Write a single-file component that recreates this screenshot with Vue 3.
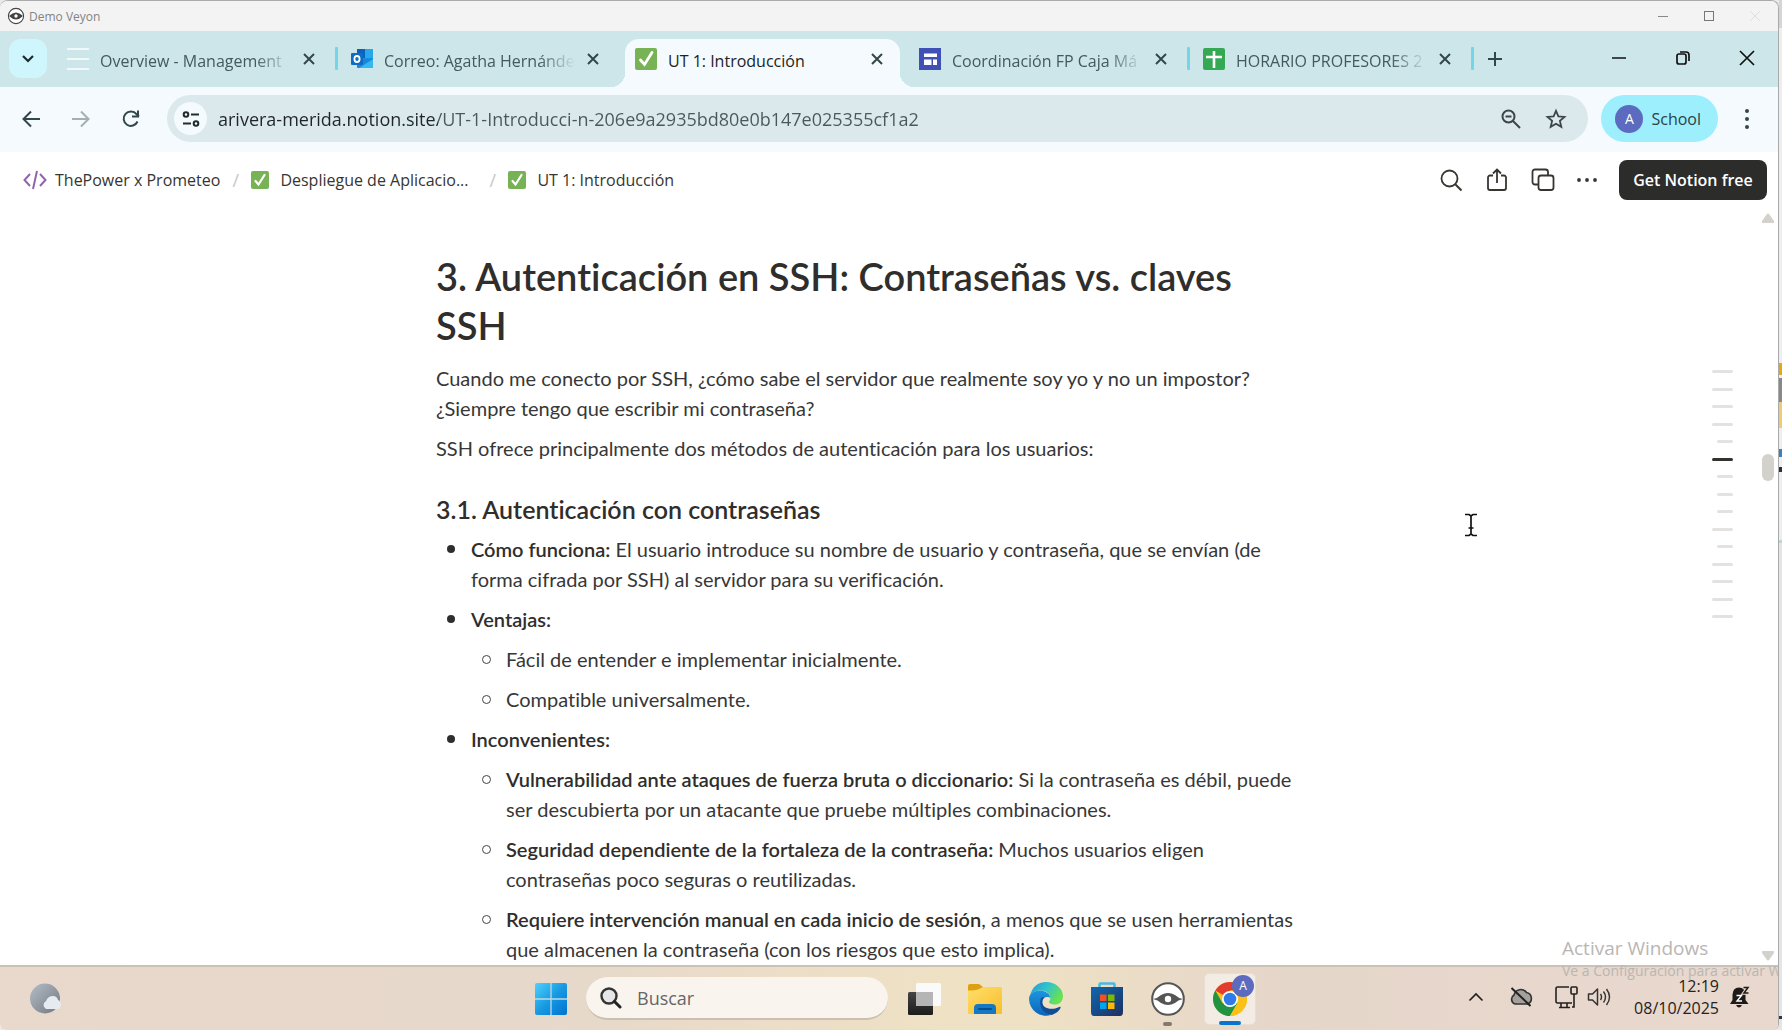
<script setup>
import { ref } from 'vue'

const tabs = [
  { icon: 'lines', title: 'Overview - Management', fade: true, sep: true },
  { icon: 'outlook', title: 'Correo: Agatha Hernánde', fade: true },
  { icon: 'check', title: 'UT 1: Introducción', active: true },
  { icon: 'sites', title: 'Coordinación FP Caja Má', fade: true, sep: true },
  { icon: 'sheets', title: 'HORARIO PROFESORES 2', fade: true, sep: true },
]
const url = ref('arivera-merida.notion.site/UT-1-Introducci-n-206e9a2935bd80e0b147e025355cf1a2')
const search = ref('')
const outline = ['', '', '', '', 'short', 'current', 'short', 'short', 'short', '', 'short', '', '', '', '']
</script>

<template>
  <div class="desktop">
    <div class="window">
      <header class="titlebar">
        <svg width="18" height="18" viewBox="0 0 18 18"><circle cx="9" cy="9" r="7.6" fill="#fff" stroke="#444" stroke-width="1.1" /><path d="M2 9q7-7 14 0q-7 7-14 0z" fill="#444" /><circle cx="9" cy="9" r="1.7" fill="#fff" /></svg>
        <span class="app-name">Demo Veyon</span>
        <button class="frame-btn" aria-label="Minimizar"><svg width="12" height="12"><path d="M1 6.500h10" stroke="#888" /></svg></button>
        <button class="frame-btn" aria-label="Maximizar"><svg width="12" height="12"><rect x="1.500" y="1.500" width="9" height="9" fill="none" stroke="#777" /></svg></button>
        <button class="frame-btn" aria-label="Cerrar"><svg width="12" height="12"><path d="M1 1l10 10M11 1L1 11" stroke="#ddd" /></svg></button>
      </header>

      <div class="tabstrip">
        <button class="tab-search" aria-label="Buscar pestañas"><svg width="14" height="10"><path d="M2 2l5 5 5-5" fill="none" stroke="#1c2a2d" stroke-width="2.200" /></svg></button>
        <nav class="tabs">
          <div v-for="t in tabs" :key="t.title" class="tab" :class="{ active: t.active, sep: t.sep }">
            <svg v-if="t.icon === 'lines'" width="22" height="24"><path d="M0 2h22M0 12h22M0 22h22" stroke="#fbfeff" stroke-width="1.500" /></svg>
            <svg v-else-if="t.icon === 'outlook'" width="22" height="24" viewBox="0 0 22 24"><rect x="6" y="2" width="16" height="18" fill="#1490df" /><rect x="14" y="2" width="8" height="9" fill="#28a8ea" /><rect x="6" y="2" width="8" height="9" fill="#0a63b8" /><path d="M6 12l16 0v8a1 1 0 0 1-1 1H7a1 1 0 0 1-1-1z" fill="#1b86d6" /><path d="M22 12L8 21h13a1 1 0 0 0 1-1z" fill="#35b8f1" /><rect x="0" y="6" width="12" height="12" rx="1" fill="#0f6cc4" /><ellipse cx="6" cy="12" rx="2.600" ry="3" fill="none" stroke="#fff" stroke-width="1.800" /></svg>
            <svg v-else-if="t.icon === 'check'" width="22" height="24" viewBox="0 0 22 24"><rect y="1" width="22" height="22" rx="2" fill="#77b255" /><path d="M5.500 13l4 4.500 7.500-12" fill="none" stroke="#fff" stroke-width="2.800" stroke-linecap="round" /></svg>
            <svg v-else-if="t.icon === 'sites'" width="22" height="24" viewBox="0 0 22 24"><rect y="1" width="22" height="22" fill="#3f51b5" /><path d="M5 6.500h13v3.500H5zM5 12.500h7.500v5.500H5zM14 12.500h4v5.500h-4z" fill="#fff" /></svg>
            <svg v-else width="22" height="24" viewBox="0 0 22 24"><rect y="1" width="22" height="22" rx="2" fill="#34a853" /><path d="M11 4v17M3 10h16" stroke="#fff" stroke-width="2.600" /></svg>
            <a href="#" class="tab-title" :class="{ fade: t.fade }">{{ t.title }}</a>
            <button class="tab-close" aria-label="Cerrar pestaña"><svg width="12" height="12"><path d="M1 1l10 10M11 1L1 11" stroke="currentColor" stroke-width="2" /></svg></button>
          </div>
          <button class="new-tab" aria-label="Nueva pestaña"><svg width="16" height="16"><path d="M8 1v14M1 8h14" stroke="#33464a" stroke-width="2" /></svg></button>
        </nav>
        <div class="win-controls">
          <button aria-label="Minimizar"><svg width="16" height="16"><path d="M1 8h14" stroke="#111" stroke-width="1.600" /></svg></button>
          <button aria-label="Restaurar"><svg width="16" height="16"><rect x="2" y="4" width="9" height="10" rx="2" fill="none" stroke="#111" stroke-width="1.700" /><path d="M5 2h6q3 0 3 3v6" fill="none" stroke="#111" stroke-width="1.700" /></svg></button>
          <button aria-label="Cerrar"><svg width="16" height="16"><path d="M1 1l14 14M15 1L1 15" stroke="#111" stroke-width="1.700" /></svg></button>
        </div>
      </div>

      <div class="toolbar">
        <button class="nav-btn" aria-label="Atrás"><svg width="20" height="20"><path d="M19 10H3M10 2.500L2.500 10l7.500 7.500" fill="none" stroke="#33464a" stroke-width="2" /></svg></button>
        <button class="nav-btn" aria-label="Adelante"><svg width="20" height="20"><path d="M1 10h16M10 2.500l7.500 7.500-7.500 7.500" fill="none" stroke="#a3b0b3" stroke-width="2" /></svg></button>
        <button class="nav-btn" aria-label="Recargar"><svg width="20" height="20"><path d="M16.500 12.500A7.200 7.200 0 1 1 15.500 5.200L18 7.500" fill="none" stroke="#33464a" stroke-width="2" /><path d="M18 1.500v7h-7v-2h5v-5z" fill="#33464a" /></svg></button>
        <div class="omnibox">
          <button class="site-info" aria-label="Información del sitio"><svg width="18" height="18"><g fill="none" stroke="#222c2e" stroke-width="2"><circle cx="4" cy="4.500" r="2.300" /><path d="M9 4.500h8M1 13.500h8" /><circle cx="14" cy="13.500" r="2.300" /></g></svg></button>
          <input v-model="url" class="url" aria-label="Dirección" spellcheck="false">
          <button class="plain" aria-label="Zoom"><svg width="22" height="22"><circle cx="8.500" cy="8.500" r="6" fill="none" stroke="#3c4648" stroke-width="2" /><path d="M13 13l7 7M5.500 8.500h6" stroke="#3c4648" stroke-width="2" /></svg></button>
          <button class="plain" aria-label="Marcador"><svg width="22" height="22"><path d="M11 2.800l2.400 5.600 6.100.5-4.600 4 1.400 5.900L11 15.700l-5.300 3.100 1.400-5.900-4.600-4 6.100-.5z" fill="none" stroke="#3c4648" stroke-width="1.800" /></svg></button>
        </div>
        <button class="profile"><span class="avatar">A</span>School</button>
        <button class="menu" aria-label="Menú"><svg width="6" height="22"><circle cx="3" cy="3" r="2" fill="#33464a" /><circle cx="3" cy="11" r="2" fill="#33464a" /><circle cx="3" cy="19" r="2" fill="#33464a" /></svg></button>
      </div>

      <div class="topbar">
        <nav class="crumbs">
          <a href="#"><svg class="code" width="24" height="20"><path d="M7 4L1.500 10 7 16M17 4l5.500 6-5.500 6M14 1l-4 18" fill="none" stroke="#9065b0" stroke-width="2" /></svg>ThePower x Prometeo</a>
          <span class="slash">/</span>
          <a href="#" class="parent"><svg class="tick" width="18" height="18"><rect width="18" height="18" rx="2" fill="#77b255" /><path d="M4.500 10l3 3.500L13.500 4" fill="none" stroke="#fff" stroke-width="2.200" stroke-linecap="round" /></svg>Despliegue de Aplicacio...</a>
          <span class="slash">/</span>
          <a href="#"><svg class="tick" width="18" height="18"><rect width="18" height="18" rx="2" fill="#77b255" /><path d="M4.500 10l3 3.500L13.500 4" fill="none" stroke="#fff" stroke-width="2.200" stroke-linecap="round" /></svg>UT 1: Introducción</a>
        </nav>
        <div class="actions">
          <button class="plain" aria-label="Buscar"><svg width="24" height="24"><circle cx="10.500" cy="10.500" r="8" fill="none" stroke="#373530" stroke-width="1.800" /><path d="M16.500 16.500l6 6" stroke="#373530" stroke-width="2" /></svg></button>
          <button class="plain" aria-label="Compartir"><svg width="24" height="24"><path d="M8 7.500H5a2 2 0 0 0-2 2V20a2 2 0 0 0 2 2h14a2 2 0 0 0 2-2V9.500a2 2 0 0 0-2-2h-3M12 15V2M8 5.500l4-4 4 4" fill="none" stroke="#373530" stroke-width="1.800" /></svg></button>
          <button class="plain" aria-label="Duplicar"><svg width="24" height="24"><rect x="7.500" y="7.500" width="15" height="14.500" rx="2.500" fill="none" stroke="#373530" stroke-width="1.800" /><path d="M7 16.500H4a2.500 2.500 0 0 1-2.500-2.500V4A2.500 2.500 0 0 1 4 1.500h10.500A2.500 2.500 0 0 1 17 4v3" fill="none" stroke="#373530" stroke-width="1.800" /></svg></button>
          <button class="plain" aria-label="Más"><svg width="20" height="24"><circle cx="2" cy="12" r="1.900" fill="#373530" /><circle cx="10" cy="12" r="1.900" fill="#373530" /><circle cx="18" cy="12" r="1.900" fill="#373530" /></svg></button>
          <button class="cta">Get Notion free</button>
        </div>
      </div>

      <main class="page">
        <div class="columns">
          <article class="doc">
            <h1>3. Autenticación en SSH: Contraseñas vs. claves<br>SSH</h1>
            <p>Cuando me conecto por SSH, ¿cómo sabe el servidor que realmente soy yo y no un impostor?<br>¿Siempre tengo que escribir mi contraseña?</p>
            <p>SSH ofrece principalmente dos métodos de autenticación para los usuarios:</p>
            <h2>3.1. Autenticación con contraseñas</h2>
            <ul>
              <li><div><b>Cómo funciona:</b> El usuario introduce su nombre de usuario y contraseña, que se envían (de<br>forma cifrada por SSH) al servidor para su verificación.</div></li>
              <li>
                <div><b>Ventajas:</b></div>
                <ul>
                  <li><div>Fácil de entender e implementar inicialmente.</div></li>
                  <li><div>Compatible universalmente.</div></li>
                </ul>
              </li>
              <li>
                <div><b>Inconvenientes:</b></div>
                <ul>
                  <li><div><b>Vulnerabilidad ante ataques de fuerza bruta o diccionario:</b> Si la contraseña es débil, puede<br>ser descubierta por un atacante que pruebe múltiples combinaciones.</div></li>
                  <li><div><b>Seguridad dependiente de la fortaleza de la contraseña:</b> Muchos usuarios eligen<br>contraseñas poco seguras o reutilizadas.</div></li>
                  <li><div><b>Requiere intervención manual en cada inicio de sesión</b>, a menos que se usen herramientas<br>que almacenen la contraseña (con los riesgos que esto implica).</div></li>
                </ul>
              </li>
            </ul>
          </article>
          <aside class="outline"><i v-for="(o, n) in outline" :key="n" :class="o"></i></aside>
        </div>
        <div class="scrollbar">
          <svg width="12" height="10"><path d="M5 1q1-1.200 2 0l5 7q.5 2-1 2H1q-1.500 0-1-2z" fill="#d3d1cb" /></svg>
          <span class="before"></span><span class="thumb"></span><span class="after"></span>
          <svg width="12" height="10"><path d="M5 9q1 1.200 2 0l5-7q.5-2-1-2H1Q-.5 0 0 2z" fill="#d3d1cb" /></svg>
        </div>
      </main>

      <footer class="taskbar">
        <button class="plain weather" aria-label="Tiempo"><svg width="32" height="32"><defs><linearGradient id="moon" x1="0" y1="0" x2="1" y2="1"><stop offset="0" stop-color="#b4bec8" /><stop offset="1" stop-color="#72777e" /></linearGradient></defs><circle cx="16" cy="15.500" r="15" fill="url(#moon)" /><path d="M17 26a4.500 4.500 0 0 1 0-8q2-5 7-5 4 0 5 4 3 1 3 4.500 0 4.500-4 4.500z" fill="#e6ebf1" /></svg></button>
        <div class="apps">
          <button class="plain" aria-label="Inicio"><svg width="32" height="32"><defs><linearGradient id="win" x1="0" y1="0" x2="1" y2="1"><stop offset="0" stop-color="#4fd2fd" /><stop offset=".5" stop-color="#189ae2" /><stop offset="1" stop-color="#0072d0" /></linearGradient></defs><rect width="32" height="32" rx="2" fill="url(#win)" /><path d="M16 0v32M0 16h32" stroke="#bcd9e6" stroke-width="1.300" /></svg></button>
          <label class="search"><svg width="22" height="22"><circle cx="9" cy="9" r="7.500" fill="#e6e6e6" stroke="#333" stroke-width="2.400" /><path d="M14.500 14.500l5.500 5.500" stroke="#222" stroke-width="3" stroke-linecap="round" /></svg><input v-model="search" placeholder="Buscar" aria-label="Buscar"></label>
          <button class="plain" aria-label="Vista de tareas"><svg width="34" height="34"><defs><linearGradient id="tv" x1="0" y1="0" x2="0" y2="1"><stop offset="0" stop-color="#444" /><stop offset="1" stop-color="#1c1c1c" /></linearGradient></defs><rect x="1" y="10" width="25" height="23" rx="1.500" fill="url(#tv)" /><rect x="9" y="1" width="25" height="23" rx="1.500" fill="#fafafa" /><rect x="9" y="10" width="17" height="14" fill="#b5b5b5" /></svg></button>
          <button class="plain" aria-label="Explorador de archivos"><svg width="34" height="34"><defs><linearGradient id="fold" x1="0" y1="0" x2="1" y2="1"><stop offset="0" stop-color="#ffde6b" /><stop offset="1" stop-color="#f8be2c" /></linearGradient></defs><path d="M0 4q0-2 2-2h9l4 3-3 5H0z" fill="#dca012" /><path d="M0 8.500q8 0 11-1.500l4-2h17q2 0 2 2v24q0 1-1 1H1q-1 0-1-1z" fill="url(#fold)" /><path d="M6 32v-6q0-4 4-4h14q4 0 4 4v6z" fill="#1478c4" /><path d="M11 27h12" stroke="#0a4f8d" stroke-width="2" stroke-linecap="round" /></svg></button>
          <button class="plain" aria-label="Edge"><svg width="34" height="34"><defs><linearGradient id="e1" x1="0" y1="0" x2="1" y2=".5"><stop offset="0" stop-color="#2794dc" /><stop offset=".5" stop-color="#30c3cc" /><stop offset="1" stop-color="#69e252" /></linearGradient><linearGradient id="e2" x1="0" y1="0" x2="0" y2="1"><stop offset="0" stop-color="#1c95e0" /><stop offset="1" stop-color="#0b66b9" /></linearGradient></defs><path d="M1 14C3 5 9 0 17 0c10 0 17 7 17 14 0 6-4 8.500-8 8.500-3.500 0-6-1.200-6-2.500 0-.8 1.300-1.400 1.300-3.500C21 12 17 8.500 12 8.500 6 8.500 2 11 1 14z" fill="url(#e1)" /><path d="M0 17C0 12 5 8.500 11 8.500c6 0 10 4 10.300 7.500-2-2-8-1.500-8 4.500 0 6 4.700 12 8.700 12.500A17 17 0 0 1 0 17z" fill="url(#e2)" /><path d="M12 16c-3 8 2 15.500 10 17 4-.5 8-4 9.500-7 .4-1-.4-1.500-1.300-1C22 29 13 26 13.300 20c0-2 .7-3.500 2-4.500-1.500-.5-2.600-.3-3.300.5z" fill="#124e96" /></svg></button>
          <button class="plain" aria-label="Microsoft Store"><svg width="34" height="34"><defs><linearGradient id="st" x1="0" y1="0" x2="1" y2="1"><stop offset="0" stop-color="#0f67b1" /><stop offset="1" stop-color="#1f3060" /></linearGradient></defs><path d="M9.500 6V2.500q0-1 1-1h13q1 0 1 1V6" fill="none" stroke="#49b9e3" stroke-width="2.500" /><path d="M1 5h32v25q0 4-3 4H4q-3 0-3-4z" fill="url(#st)" /><path d="M10 12.500h6.500V19H10z" fill="#f25022" /><path d="M18 12.500h6.500V19H18z" fill="#7fba00" /><path d="M10 20.500h6.500V27H10z" fill="#00a4ef" /><path d="M18 20.500h6.500V27H18z" fill="#ffb900" /></svg></button>
          <button class="plain running" aria-label="Veyon"><svg width="34" height="34"><circle cx="17" cy="17" r="15.800" fill="#fff" stroke="#555" stroke-width="2" /><path d="M2 17q5-1 8-4 7-4 14 0 3 3 8 4-5 1-8 4-7 4-14 0-3-3-8-4z" fill="#555" /><circle cx="17" cy="17" r="3.200" fill="#fff" /></svg></button>
          <button class="plain chrome" aria-label="Chrome"><svg width="34" height="34"><circle cx="17" cy="17" r="17" fill="#fbc116" /><path d="M17 17L2.300 8.500A17 17 0 0 1 31.700 8.500H17z" fill="#e33b2e" /><path d="M2.300 8.500A17 17 0 0 0 17 34l7.400-12.800L17 17l-7.400 4.200z" fill="#229342" /><path d="M31.700 8.500H17l7.400 12.700L17 34A17 17 0 0 0 31.700 8.500z" fill="#fbc116" /><circle cx="17" cy="17" r="8" fill="#fff" /><circle cx="17" cy="17" r="6.300" fill="#2f7be8" /></svg><span class="badge">A</span></button>
        </div>
        <div class="tray">
          <button class="plain up" aria-label="Iconos ocultos"><svg width="16" height="10"><path d="M1.500 8.500L8 2l6.500 6.500" fill="none" stroke="#222" stroke-width="1.700" /></svg></button>
          <button class="plain cloud" aria-label="OneDrive"><svg width="24" height="22"><path d="M6 18a5 5 0 0 1-1-9 7 7 0 0 1 12.500-2.500A6 6 0 0 1 18.500 18z" fill="#a5a09c" stroke="#333" stroke-width="1.600" /><path d="M2.500 2l19 18" stroke="#222" stroke-width="2" /></svg></button>
          <button class="plain" aria-label="Red"><svg width="24" height="24"><path d="M15 2H3.500Q2 2 2 4v12q0 2 1.500 2H18M7 18v4M13 18v4M5 22.500h11" fill="none" stroke="#222" stroke-width="1.600" /><rect x="17" y="2" width="6" height="7" rx="1" fill="none" stroke="#222" stroke-width="1.600" /><path d="M20 9v13h-2" fill="none" stroke="#222" stroke-width="1.600" /></svg></button>
          <button class="plain" aria-label="Volumen"><svg width="24" height="22"><path d="M1.500 8v6h4l5 5V3l-5 5z" fill="none" stroke="#333" stroke-width="1.500" stroke-linejoin="round" /><path d="M13.500 8q2 3 0 6M16.500 5.500q4 5.500 0 11M19.500 3q6 8 0 16" fill="none" stroke="#333" stroke-width="1.400" /></svg></button>
          <time class="clock">12:19<br>08/10/2025</time>
          <button class="plain" aria-label="Notificaciones"><svg width="20" height="22"><path d="M9 1.500q6 0 6.500 7V14l3 4H0l2.500-4V8.500q.5-7 6.500-7zM6 19h6q-3 5-6 0z" fill="#1d1a18" /><path d="M13.500 1.500H18l-4 5.500h4.500" fill="none" stroke="#e8d8cc" stroke-width="3.500" /><path d="M13.500 1.500H18l-4 5.500h4.500" fill="none" stroke="#1d1a18" stroke-width="1.500" /><path d="M6.500 9.500h5l-4.500 5.500h5" fill="none" stroke="#fff" stroke-width="1.400" /></svg></button>
        </div>
      </footer>

      <div class="watermark"><strong>Activar Windows</strong><span>Ve a Configuración para activar Windows.</span></div>
      <svg class="cursor" width="14" height="24"><path d="M1 1.500h4l2 1.500 2-1.500h4M7 3v18M1 22.500h4L7 21l2 1.500h4M4.500 15h5" fill="none" stroke="#111" stroke-width="1.700" /></svg>
    </div>
    <div class="behind"></div>
  </div>
</template>

<style>
body { background: #e9e9e9; overflow: hidden; }
</style>

<style scoped>
* { box-sizing: border-box; }
.desktop { display: flex; height: 100vh; font-family: "Open Sans", "Noto Sans", sans-serif; color: #373530; }
.window { position: relative; flex: 1; min-width: 0; display: flex; flex-direction: column; background: #fff; border-top: 1px solid #aaa; border-right: 1px solid #aaa; border-radius: 8px 8px 6px 6px; overflow: hidden; }
.behind { width: 3px; background: linear-gradient(#d5d5d5 0 28px, #eee 28px 363px, #e5a80f 363px 375px, #eee 375px 378px, #888 378px 402px, #edcd72 402px 428px, #eee 428px 449px, #3d7fb8 449px 457px, #eee 457px 467px, #234 467px 472px, #eee 472px 540px, #bcd6db 540px 543px, #e5e5e5 543px 1016px, #335 1016px 1019px, #e5e5e5 1019px); }
button { border: 0; padding: 0; margin: 0; background: none; font: inherit; color: inherit; display: flex; align-items: center; justify-content: center; flex: none; }
a { color: inherit; text-decoration: none; }
input { border: 0; padding: 0; outline: 0; background: none; font: inherit; min-width: 0; flex: 1; }
svg { display: block; flex: none; }

.titlebar { display: flex; align-items: center; height: 30px; padding: 0 0 0 7px; background: #f3f3f3; flex: none; }
.app-name { flex: 1; margin-left: 4px; font-size: 12px; color: #848484; }
.frame-btn { width: 46px; height: 28px; }

.tabstrip { display: flex; height: 56px; padding: 8px 8px 0 9px; background: #cde6ea; flex: none; }
.tab-search { width: 38px; height: 39px; border-radius: 12px; background: #d0f6fd; }
.tabs { display: flex; flex: 1; min-width: 0; gap: 9px; margin-left: 10px; }
.tab { position: relative; display: flex; flex: 0 1 275px; min-width: 0; height: 39px; align-items: center; padding: 0 17px 0 10px; color: #45595d; font-size: 16px; }
.tab.sep::after { content: ""; position: absolute; right: -6px; top: 8px; width: 3px; height: 23px; background: #74d5e6; border-radius: 1px; }
.tab-title { flex: 1; min-width: 0; margin: 4px 8px 0 11px; height: 26px; line-height: 26px; white-space: nowrap; overflow: hidden; }
.tab-title.fade { mask-image: linear-gradient(to right, #000 calc(100% - 40px), transparent calc(100% - 4px)); }
.tab-close { color: #33464a; }
.tab.active { height: 48px; padding-bottom: 9px; background: #f4fafd; border-radius: 14px 14px 0 0; color: #1d2426; }
.tab.active::before, .tab.active::after { content: ""; position: absolute; bottom: 0; width: 14px; height: 14px; }
.tab.active::before { left: -14px; background: radial-gradient(circle at 0 0, transparent 14px, #f4fafd 14px); }
.tab.active::after { right: -14px; background: radial-gradient(circle at 100% 0, transparent 14px, #f4fafd 14px); }
.new-tab { width: 36px; height: 39px; }
.win-controls { display: flex; height: 38px; }
.win-controls button { width: 64px; }
.win-controls button:last-child { margin-right: -9px; }

.toolbar { display: flex; align-items: center; height: 65px; padding: 0 21px 2px 6px; background: #f4fafd; flex: none; }
.nav-btn { width: 50px; height: 40px; }
.omnibox { display: flex; flex: 1; align-items: center; height: 47px; margin-left: 11px; padding: 0 21px 0 7px; background: #dbe9ed; border-radius: 24px; gap: 23px; }
.site-info { width: 33px; height: 33px; border-radius: 50%; background: #f4fafd; }
.url { height: 40px; margin-left: -12px; font-size: 18px; color: transparent; background: linear-gradient(to right, #1f2628 220px, #4b5759 220px); background-clip: text; }
.profile { height: 47px; margin-left: 13px; padding: 0 17px 0 14px; border-radius: 24px; background: #9deffe; font-size: 16px; color: #2b4246; gap: 8px; }
.avatar { display: flex; align-items: center; justify-content: center; width: 28px; height: 28px; border-radius: 50%; background: #5c6bc0; color: #fff; font-size: 14px; }
.menu { width: 20px; margin-left: 19px; height: 40px; }

.topbar { display: flex; align-items: center; justify-content: space-between; height: 58px; padding: 0 11px 3px 23px; flex: none; font-size: 16px; }
.crumbs, .crumbs a, .actions { display: flex; align-items: center; }
.crumbs .parent { min-width: 226px; }
.code { margin-right: 8px; }
.tick { margin-right: 11px; }
.slash { width: 31px; text-align: center; color: #c9c7c3; font-size: 18px; }
.actions { gap: 22px; }
.cta { width: 148px; height: 40px; border-radius: 8px; background: #2c2c2b; color: #fff; font-weight: 600; font-size: 16px; }

.page { display: flex; flex: 1; min-height: 0; overflow: hidden; }
.columns { display: grid; flex: 1; grid-template-columns: 1fr 876px 1fr; min-width: 0; }
.doc { grid-column: 2; font-family: Lato, "Open Sans", sans-serif; font-size: 20px; line-height: 30px; font-variant-ligatures: none; color: #373737; white-space: nowrap; }
h1, h2, p, ul { margin: 0; padding: 0; }
h1 { padding-top: 42px; margin-bottom: 8px; font-size: 38px; line-height: 49px; font-weight: 600; color: #2f2e2c; }
h2 { margin-top: 21px; font-size: 25px; line-height: 40px; font-weight: 600; color: #2f2e2c; }
p { padding: 5px 0; }
b { font-weight: 600; color: #2f2e2c; }
ul { list-style: none; }
li { position: relative; padding-left: 35px; }
li > div { padding: 5px 0; }
li::before { content: ""; position: absolute; left: 11px; top: 16px; width: 8px; height: 8px; border-radius: 50%; background: #2f2e2c; }
li li::before { width: 7px; height: 7px; border: 1px solid #444; background: none; }
.outline { grid-column: 3; justify-self: end; display: flex; flex-direction: column; align-items: flex-end; justify-content: space-between; height: 248px; margin: 160px 15px 0 0; }
.outline i { width: 21px; height: 3px; border-radius: 2px; background: #e3e2e0; }
.outline .short { width: 16px; }
.outline .current { background: #33322f; }
.scrollbar { display: flex; flex-direction: column; align-items: center; width: 30px; padding: 3px 4px 4px 13px; }
.before { flex: 231; }
.thumb { width: 12px; height: 27px; border-radius: 6px; background: #d3d1cb; }
.after { flex: 470; }

.taskbar { display: grid; grid-template-columns: 1fr auto 1fr; align-items: center; height: 65px; flex: none; border-top: 2px solid #c9c2b5; background: linear-gradient(to right, #e9d8cc, #e6d8cb 30%, #efe1c4 53%, #efe1c4 58%, #e5d6ca 72%, #e9d8ce); }
.weather { justify-self: start; margin-left: 29px; }
.apps { display: flex; align-items: center; height: 63px; padding-left: 13px; gap: 27px; }
.search { display: flex; align-items: center; width: 302px; height: 43px; margin: 0 -8px; padding: 0 14px; border-radius: 22px; border-bottom: 2px solid #c9bfb2; background: #f9f5ee; gap: 15px; font-size: 18px; color: #666; }
.search input::placeholder { color: #666; opacity: 1; }
.running { position: relative; }
.running::after { content: ""; position: absolute; left: 12px; bottom: -10px; width: 9px; height: 4px; border-radius: 2px; background: #85796e; }
.chrome { position: relative; width: 52px; height: 52px; margin-left: -8px; border-radius: 5px; background: #f3ece5; border: 1px solid #e8ded3; }
.chrome::after { content: ""; position: absolute; left: 14px; bottom: -1px; width: 22px; height: 4px; border-radius: 2px; background: #0a74cc; }
.badge { position: absolute; right: 1px; top: 1px; width: 22px; height: 22px; border-radius: 50%; background: #5c6bc0; color: #fff; font-size: 12px; line-height: 22px; text-align: center; }
.tray { display: flex; justify-self: end; align-items: center; gap: 9px; margin-right: 28px; padding-bottom: 3px; }
.up { margin-right: 16px; }
.cloud { margin-right: 12px; }
.clock { margin: 0 2px 0 14px; font-size: 16px; line-height: 22px; text-align: right; color: #252220; }
.watermark { position: absolute; left: calc(100% - 216px); bottom: 49px; display: flex; flex-direction: column; white-space: nowrap; color: #b9b6b4; }
.watermark strong { font-size: 19px; line-height: 26px; font-weight: 400; }
.watermark span { font-size: 14px; line-height: 20px; }
.cursor { position: absolute; left: 1464px; top: 512px; }
</style>
